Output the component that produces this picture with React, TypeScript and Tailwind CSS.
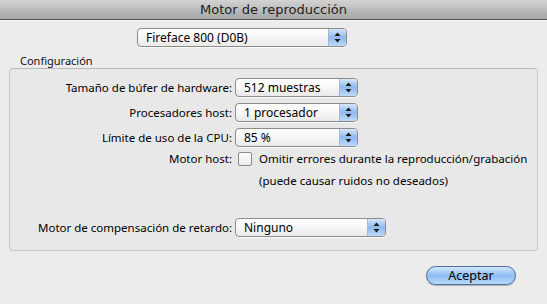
import React from "react";

function Arrows() {
  return (
    <svg width="7" height="11" viewBox="0 0 7 11">
      <path d="M3.5 0.5 L6.5 4 L0.5 4 Z" fill="#1a1a1a" />
      <path d="M3.5 10.5 L6.5 7 L0.5 7 Z" fill="#1a1a1a" />
    </svg>
  );
}

function Popup({ className, text }: { className: string; text: string }) {
  return (
    <div
      className={
        "flex h-[19px] rounded-[4px] border border-[#8c8c8c] overflow-hidden bg-gradient-to-b from-white via-[#f7f7f7] to-[#e9e9e9] shadow-[0_1px_0_rgba(255,255,255,0.7)] " +
        className
      }
    >
      <div className="flex-1 pl-[8px] text-[12px] leading-[17px] text-black whitespace-nowrap">{text}</div>
      <div className="w-[18px] border-l border-[#a9b8cc] bg-gradient-to-b from-[#d6e6fa] via-[#8fb9ef] to-[#c0dbfa] flex items-center justify-center">
        <Arrows />
      </div>
    </div>
  );
}

export default function App() {
  return (
    <div className="w-[547px] h-[304px] bg-[#ececec] flex flex-col font-['Noto_Sans',sans-serif] text-black overflow-hidden">
      <div className="h-[20px] shrink-0 bg-gradient-to-b from-[#d3d3d3] to-[#a6a6a6] border-b border-[#555555] flex items-center justify-center text-[13px] text-[#1e1e1e] font-['DejaVu_Sans',sans-serif]">
        Motor de reproducción
      </div>
      <div className="h-px bg-[#f6f6f6]" />
      <div className="pl-[137px] pt-[7px]">
        <Popup className="w-[210px]" text="Fireface 800 (D0B)" />
      </div>
      <div className="pl-[20px] pt-[7px] text-[11px] leading-[13px] text-[#111]">Configuración</div>
      <div className="mx-[9px] mt-[1px] h-[183px] rounded-[4px] border border-[#c9c9c9] border-t-[#b9b9b9] bg-[#e8e8e8] pt-[9px] text-[11.5px] leading-[16px]">
        <div className="grid grid-cols-[222px_auto] gap-x-[3px] items-center">
          <div className="text-right whitespace-nowrap">Tamaño de búfer de hardware:</div>
          <Popup className="w-[123px]" text="512 muestras" />
          <div className="text-right whitespace-nowrap mt-[6px]">Procesadores host:</div>
          <Popup className="w-[123px] mt-[6px]" text="1 procesador" />
          <div className="text-right whitespace-nowrap mt-[6px]">Límite de uso de la CPU:</div>
          <Popup className="w-[123px] mt-[6px]" text="85 %" />
          <div className="text-right whitespace-nowrap mt-[4px]">Motor host:</div>
          <div className="flex items-center mt-[4px] whitespace-nowrap">
            <div className="w-[14px] h-[14px] ml-[3px] rounded-[2px] border border-[#8a8a8a] bg-gradient-to-b from-white to-[#ececec]" />
            <span className="ml-[7px]">Omitir errores durante la reproducción/grabación</span>
          </div>
          <div />
          <div className="pl-[24px] mt-[6px] whitespace-nowrap">(puede causar ruidos no deseados)</div>
          <div className="text-right whitespace-nowrap mt-[29px]">Motor de compensación de retardo:</div>
          <Popup className="w-[151px] mt-[29px]" text="Ninguno" />
        </div>
      </div>
      <div className="flex justify-start pl-[426px] pt-[15px]">
        <button className="w-[90px] h-[19px] rounded-full border border-[#4d6e9c] bg-gradient-to-b from-[#d6e8fb] via-[#8dbcf0] to-[#b9dbfb] text-[12.5px] leading-[17px] text-black shadow-[0_1px_1px_rgba(0,0,0,0.25)]">
          Aceptar
        </button>
      </div>
    </div>
  );
}
